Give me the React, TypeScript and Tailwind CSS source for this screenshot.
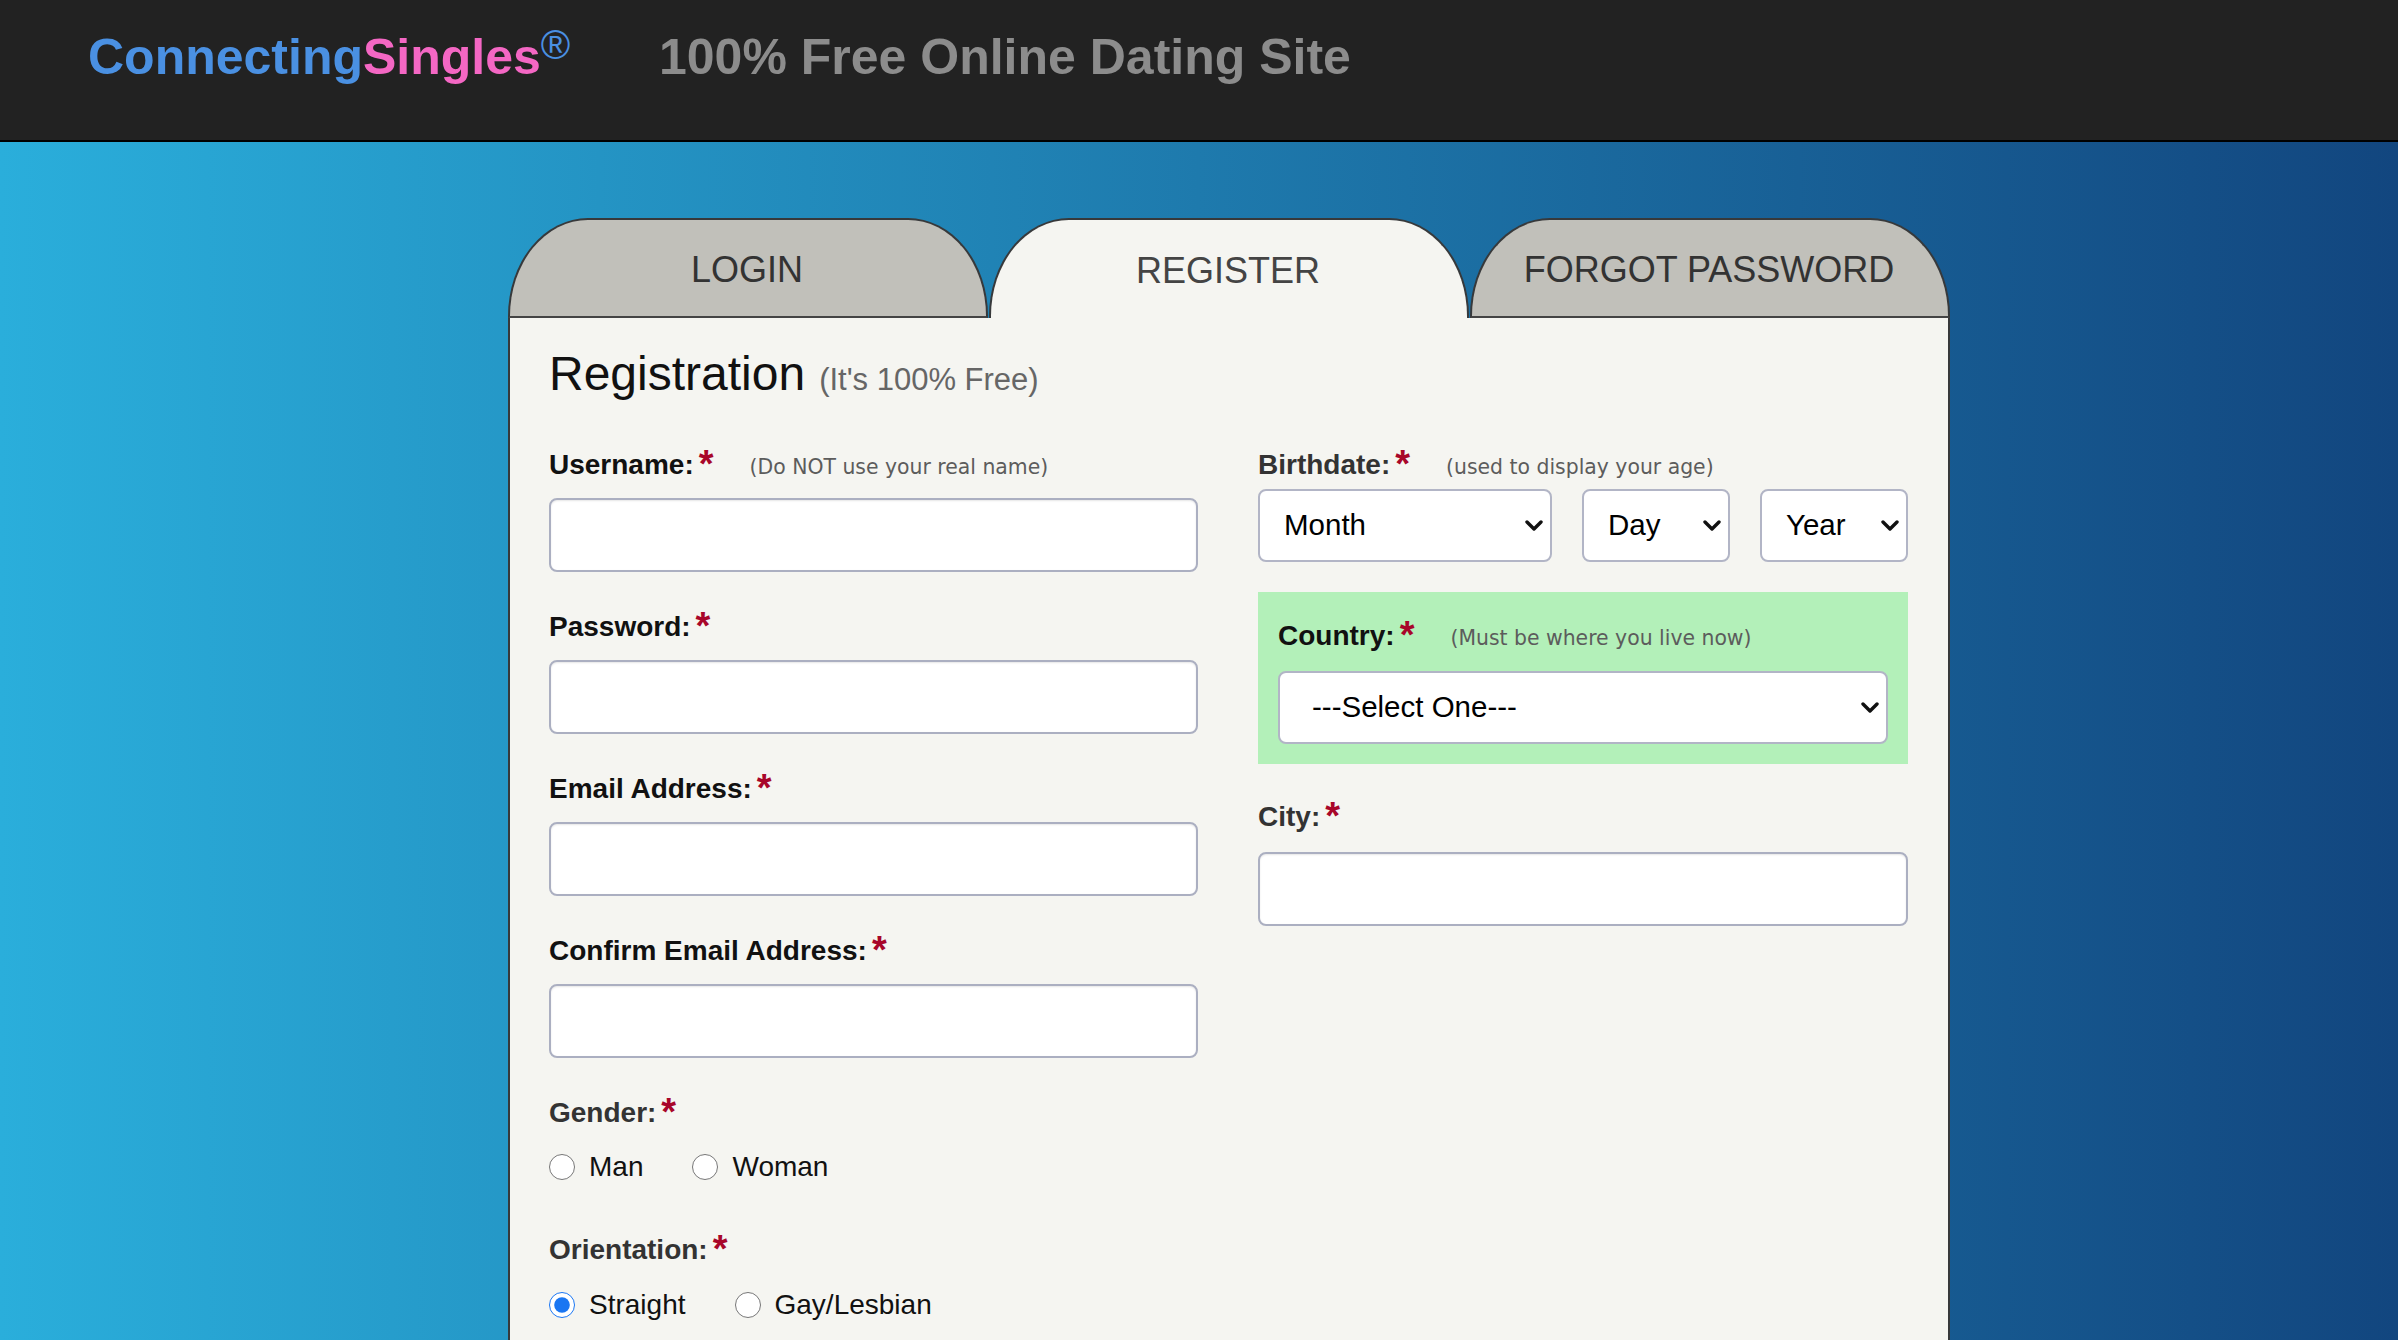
import React from "react";

const Star = () => (
  <span className="ml-[5px] inline-block h-[20px] -translate-y-[10px] text-[38px] leading-[38px] font-bold text-[#a8062a]">*</span>
);

function Label({ text, hint, color = "text-[#111]" }: { text: string; hint?: string; color?: string }) {
  return (
    <div className="h-[32px] flex items-center whitespace-nowrap">
      <span className={`text-[28px] leading-[32px] font-bold ${color}`}>{text}</span>
      <Star />
      {hint && (
        <span className="ml-[36px] text-[20.4px] leading-[32px] text-[#5c5c5c] [font-family:'DejaVu_Sans',sans-serif] pt-[4px]">{hint}</span>
      )}
    </div>
  );
}

const inputCls = "block w-full h-[74px] rounded-[8px] border-2 border-[#abafc1] bg-white shadow-[inset_0_1px_2px_rgba(0,0,0,0.1)]";

function Select({ text, width, pad }: { text: string; width: string; pad: string }) {
  return (
    <div className={`relative ${width}`}>
      <select className={`block w-full h-[73px] appearance-none rounded-[8px] border-2 border-[#b2b5c6] bg-white text-[29.5px] text-black ${pad}`}>
        <option>{text}</option>
      </select>
      <svg className="pointer-events-none absolute right-[9px] top-[31px]" width="18" height="11" viewBox="0 0 18 11" fill="none">
        <path d="M2 2 L9 9 L16 2" stroke="#111" strokeWidth="3.4" strokeLinecap="round" strokeLinejoin="round" />
      </svg>
    </div>
  );
}

function Field({ label }: { label: string }) {
  return (
    <div className="pb-[39px]">
      <Label text={label} />
      <input type="text" className={`${inputCls} mt-[17px]`} />
    </div>
  );
}

function Radio({ label, checked, name }: { label: string; checked?: boolean; name: string }) {
  return (
    <label className="flex items-center gap-[14px] text-[28px] leading-[32px] text-[#111]">
      <input type="radio" name={name} defaultChecked={checked} className="m-0 w-[26px] h-[26px] accent-[#1a76f2]" />
      {label}
    </label>
  );
}

function Tab({ label, active }: { label: string; active?: boolean }) {
  return (
    <div
      className={`flex-1 h-[100px] pt-[3px] pr-[2px] flex items-center justify-center rounded-tl-[80px_98px] rounded-tr-[80px_98px] border-t-2 border-x-2 border-[#37393b] text-[36px] ${
        active ? "bg-[#f5f5f1] text-[#444]" : "bg-[#c1c0ba] text-[#333] border-b-2 border-b-[#444]"
      }`}
    >
      {label}
    </div>
  );
}

export default function App() {
  return (
    <div className="h-[1340px] overflow-hidden flex flex-col bg-[linear-gradient(90deg,#2aaedb,#12467f)] [font-family:'Liberation_Sans',Arial,sans-serif]">
      <header className="h-[142px] shrink-0 bg-[#222222] border-b-2 border-black flex items-start pl-[88px] pt-[28px] font-bold text-[50px] leading-[58px] whitespace-nowrap">
        <div className="w-[571px] shrink-0">
          <span className="text-[#4a90e2]">Connecting</span>
          <span className="text-[#f467c4]">Singles</span>
          <span className="inline-block h-0 -translate-y-[15px] text-[#4a90e2] font-normal text-[40px] leading-[0]">®</span>
        </div>
        <div className="text-[#8c8c8c]">100% Free Online Dating Site</div>
      </header>
      <main className="flex-1 pl-[508px] pt-[76px]">
        <div className="w-[1442px] h-full flex flex-col">
          <div className="flex gap-px">
            <Tab label="LOGIN" />
            <Tab label="REGISTER" active />
            <Tab label="FORGOT PASSWORD" />
          </div>
          <div className="flex-1 bg-[#f5f5f1] border-x-2 border-[#37393b] pl-[39px] pr-[39px] pt-[28px]">
            <div className="flex items-baseline h-[56px] mb-[47px] whitespace-nowrap">
              <span className="text-[48px] leading-[56px] text-[#111]">Registration</span>
              <span className="ml-[14px] text-[31px] text-[#666]">(It's 100% Free)</span>
            </div>
            <div className="flex gap-[60px]">
              <div className="w-[649px] shrink-0">
                <Label text="Username:" hint="(Do NOT use your real name)" />
                <input type="text" className={`${inputCls} mt-[17px] mb-[39px]`} />
                <Field label="Password:" />
                <Field label="Email Address:" />
                <Field label="Confirm Email Address:" />
                <Label text="Gender:" color="text-[#333]" />
                <div className="flex gap-[49px] mt-[22px] mb-[51px]">
                  <Radio name="g" label="Man" />
                  <Radio name="g" label="Woman" />
                </div>
                <Label text="Orientation:" color="text-[#333]" />
                <div className="flex gap-[49px] mt-[23px]">
                  <Radio name="o" label="Straight" checked />
                  <Radio name="o" label="Gay/Lesbian" />
                </div>
              </div>
              <div className="w-[650px] shrink-0">
                <Label text="Birthdate:" color="text-[#333]" hint="(used to display your age)" />
                <div className="flex justify-between mt-[8px] mb-[30px]">
                  <Select text="Month" width="w-[294px]" pad="pl-[24px]" />
                  <Select text="Day" width="w-[148px]" pad="pl-[24px]" />
                  <Select text="Year" width="w-[148px]" pad="pl-[24px]" />
                </div>
                <div className="bg-[#b3f0b9] h-[172px] px-[20px] pt-[28px] mb-[37px]">
                  <Label text="Country:" hint="(Must be where you live now)" />
                  <div className="mt-[19px]">
                    <Select text="---Select One---" width="w-full" pad="pl-[32px]" />
                  </div>
                </div>
                <Label text="City:" color="text-[#333]" />
                <input type="text" className={`${inputCls} mt-[19px]`} />
              </div>
            </div>
          </div>
        </div>
      </main>
    </div>
  );
}
